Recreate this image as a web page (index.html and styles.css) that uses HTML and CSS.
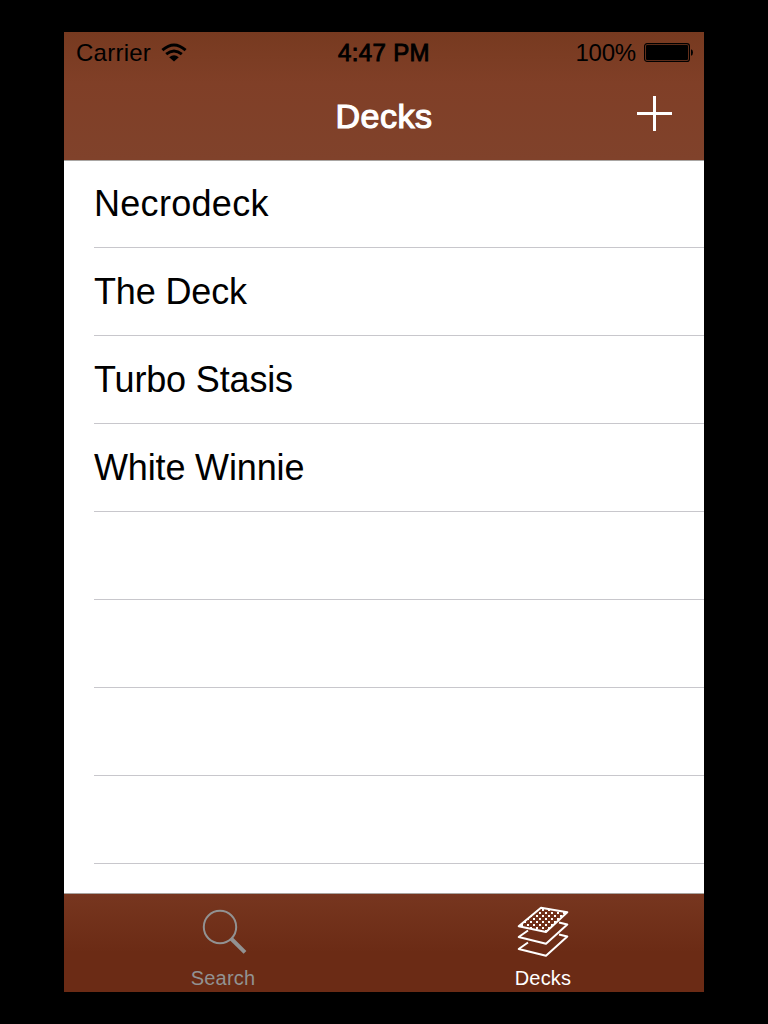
FILE: index.html
```html
<!DOCTYPE html>
<html lang="en">
<head>
<meta charset="utf-8">
<title>Decks</title>
<link rel="stylesheet" href="styles.css">
</head>
<body>
<main class="phone">
  <header class="header">
    <div class="status">
      <div class="carrier"><span>Carrier</span>
        <svg class="wifi" width="26" height="20" viewBox="0 0 26 20"><g fill="none" stroke="#000" stroke-width="2.9"><path d="M1.4 7.1Q13-3.2 24.6 7.1"/><path d="M5.2 11.2Q13 4.7 20.8 11.2"/></g><path d="M8.2 14.2Q13 10.4 17.8 14.2L13 18.6Z"/></svg>
      </div>
      <time class="clock">4:47 PM</time>
      <div class="power"><span>100%</span>
        <svg class="battery" width="50" height="20" viewBox="0 0 50 20"><rect x=".6" y=".6" width="44.8" height="17.8" rx="2.5" fill="none" stroke="#000" stroke-width="1.2"/><rect x="2" y="2" width="42" height="15" rx="1"/><path d="M47 6.2Q49 6.8 49 9.5T47 12.8Z"/></svg>
      </div>
    </div>
    <div class="nav">
      <h1 class="title">Decks</h1>
      <svg class="add" width="35" height="35" viewBox="0 0 35 35"><path d="M16 0h3v16h16v3H19v16h-3V19H0v-3h16z" fill="#fff"/></svg>
    </div>
  </header>
  <ul class="list">
    <li class="row wide">Necrodeck</li>
    <li class="row">The Deck</li>
    <li class="row">Turbo Stasis</li>
    <li class="row">White Winnie</li>
    <li class="row"></li>
    <li class="row"></li>
    <li class="row"></li>
    <li class="row"></li>
  </ul>
  <nav class="tabs">
    <div class="tab">
      <svg width="60" height="60" viewBox="194 902 60 60" fill="none" stroke="#929292"><circle cx="220" cy="927" r="16.2" stroke-width="2"/><path d="M231 938.5l14 13.8" stroke-width="4"/></svg>
      <span>Search</span>
    </div>
    <div class="tab active">
      <svg width="60" height="60" viewBox="514 902 60 60" fill="none" stroke="#fff" stroke-width="2" stroke-linejoin="round">
        <defs><pattern id="dots" x="518" y="909" width="6" height="6" patternUnits="userSpaceOnUse"><path d="M0 0h2v2H0zM3 3h2v2H3z" fill="#fff" stroke="none"/></pattern></defs>
        <path d="M541 907.8L567.3 912.3 546 932 518.7 926.2Z" fill="url(#dots)"/>
        <path d="M528 930.5L518.7 937 546 943.8 567.3 924.5 559 922.5M528 942.5L518.7 949 546 955.8 567.3 936.5 559 934.5"/>
      </svg>
      <span>Decks</span>
    </div>
  </nav>
</main>
</body>
</html>
```
FILE: styles.css
```css
* { box-sizing: border-box; }
body { margin: 0; height: 1024px; padding: 32px 64px; background: #000; font-family: "Liberation Sans", Arial, sans-serif; }
.phone { width: 640px; height: 960px; display: flex; flex-direction: column; background: #fff; overflow: hidden; }
.header { height: 129px; flex: none; background: linear-gradient(#773a20, #803f27 40%, #80422b); border-bottom: 1px solid #a9a6a3; }
.status { height: 40px; padding: 2px 10px 0 12px; display: grid; grid-template-columns: 1fr auto 1fr; align-items: center; font-size: 24px; line-height: 38px; }
.carrier, .power { display: flex; align-items: center; }
.carrier { letter-spacing: .25px; }
.wifi { margin-left: 10px; }
.clock { margin-right: 2px; letter-spacing: .35px; -webkit-text-stroke: .9px #000; }
.power { justify-content: flex-end; }
.power span { letter-spacing: -.2px; }
.battery { margin-left: 8px; }
.nav { height: 88px; display: grid; grid-template-columns: 1fr auto 1fr; align-items: center; }
.title { grid-column: 2; margin: 0; font-size: 34px; font-weight: 400; line-height: 88px; letter-spacing: .5px; color: #fff; -webkit-text-stroke: 1.2px #fff; }
.add { justify-self: end; margin: 0 32px 5px 0; }
.list { flex: 1; min-height: 0; margin: 0; padding: 0 0 0 30px; list-style: none; }
.row { height: 88px; padding-top: 1px; border-bottom: 1px solid #c8c7cc; font-size: 36px; line-height: 86px; letter-spacing: -.15px; }
.wide { letter-spacing: .3px; }
.row:first-child { height: 87px; padding-top: 0; }
.tabs { height: 99px; flex: none; display: flex; border-top: 1px solid #a9a39f; background: linear-gradient(#77361f, #6b2b15 60%, #6b2b15); }
.tab { flex: 1; display: flex; flex-direction: column; align-items: center; padding-top: 8px; color: #929292; font-size: 20px; line-height: 24px; letter-spacing: .2px; }
.tab span { margin: 4px 2px 0 0; }
.active { color: #fff; }
```
